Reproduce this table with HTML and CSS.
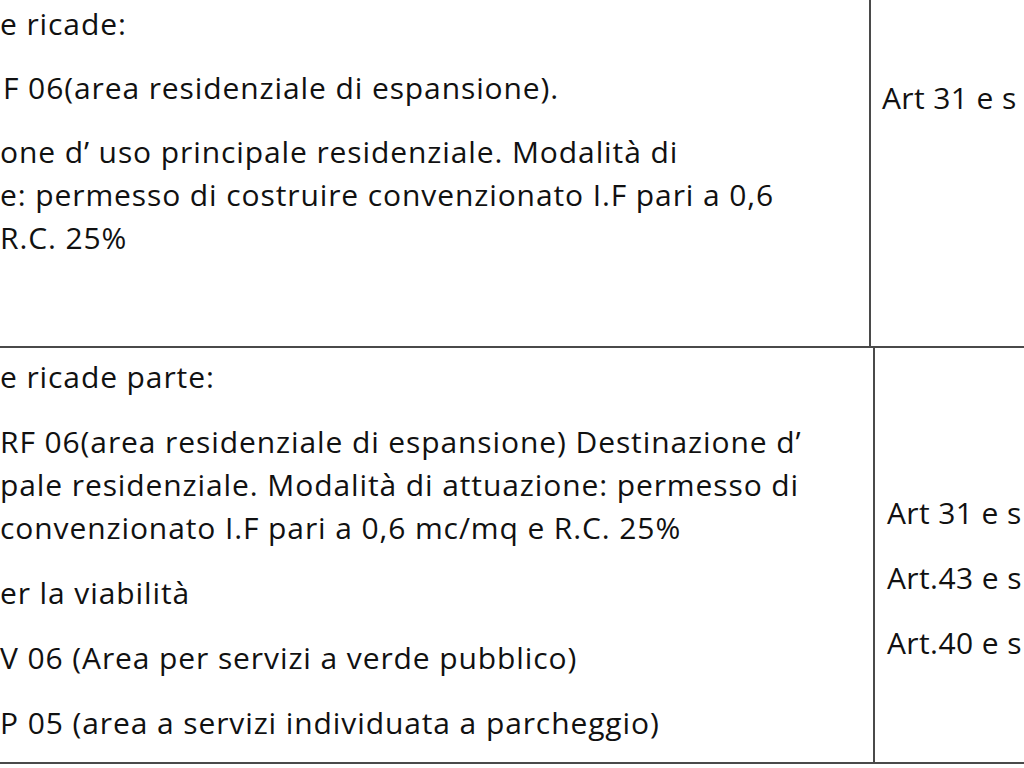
FILE: index.html
```html
<!DOCTYPE html>
<html lang="it">
<head>
<meta charset="utf-8">
<link rel="stylesheet" href="styles.css">
</head>
<body>
<div class="table">
  <div class="row row1">
    <div class="cell left">
      <p class="para first">e ricade:</p>
      <p class="para">F 06(area residenziale di espansione).</p>
      <p class="para">one d’ uso principale residenziale. Modalità di<br>e: permesso di costruire convenzionato I.F pari a 0,6<br>R.C. 25%</p>
    </div>
    <div class="cell right">
      <p class="art art-top">Art 31 e s</p>
    </div>
  </div>
  <div class="row row2">
    <div class="cell left">
      <p class="para first">e ricade parte:</p>
      <p class="para">RF 06(area residenziale di espansione) Destinazione d’<br>pale residenziale. Modalità di attuazione: permesso di<br>convenzionato I.F pari a 0,6 mc/mq e R.C. 25%</p>
      <p class="para">er la viabilità</p>
      <p class="para">V 06 (Area per servizi a verde pubblico)</p>
      <p class="para">P 05 (area a servizi individuata a parcheggio)</p>
    </div>
    <div class="cell right">
      <p class="art art-first">Art 31 e s</p>
      <p class="art">Art.43 e s</p>
      <p class="art">Art.40 e s</p>
    </div>
  </div>
</div>
</body>
</html>
```

FILE: styles.css
```css
html, body {
  margin: 0;
  padding: 0;
  background: #ffffff;
}
body {
  width: 1024px;
  height: 768px;
  overflow: hidden;
  font-family: "Open Sans", "Lato", sans-serif;
  font-size: 30px;
  font-weight: 500;
  letter-spacing: 0.9px;
  color: #111111;
}
.table {
  display: flex;
  flex-direction: column;
}
.row {
  display: grid;
}
.row1 {
  grid-template-columns: 871px 1fr;
  height: 346px;
  border-bottom: 2px solid #4a4a4a;
}
.row2 {
  grid-template-columns: 875px 1fr;
  height: 414px;
  border-bottom: 2px solid #4a4a4a;
}
.cell.left {
  border-right: 2px solid #4a4a4a;
  overflow: hidden;
  white-space: nowrap;
}
.para {
  margin: 0;
  line-height: 43px;
}
.row1 .para { margin-top: 21px; }
.row1 .para.first { margin-top: 2px; }
.row2 .para { margin-top: 22px; }
.row2 .para.first { margin-top: 7px; }
.row1 .left .para:nth-child(2) { padding-left: 3px; }
.right {
  white-space: nowrap;
  overflow: hidden;
}
.art {
  margin: 0;
  line-height: 43px;
  letter-spacing: 0.4px;
}
.art-top {
  margin-top: 76px;
  padding-left: 11px;
}
.row2 .art {
  padding-left: 12px;
  margin-top: 22px;
}
.row2 .art.art-first {
  margin-top: 143px;
}
```
